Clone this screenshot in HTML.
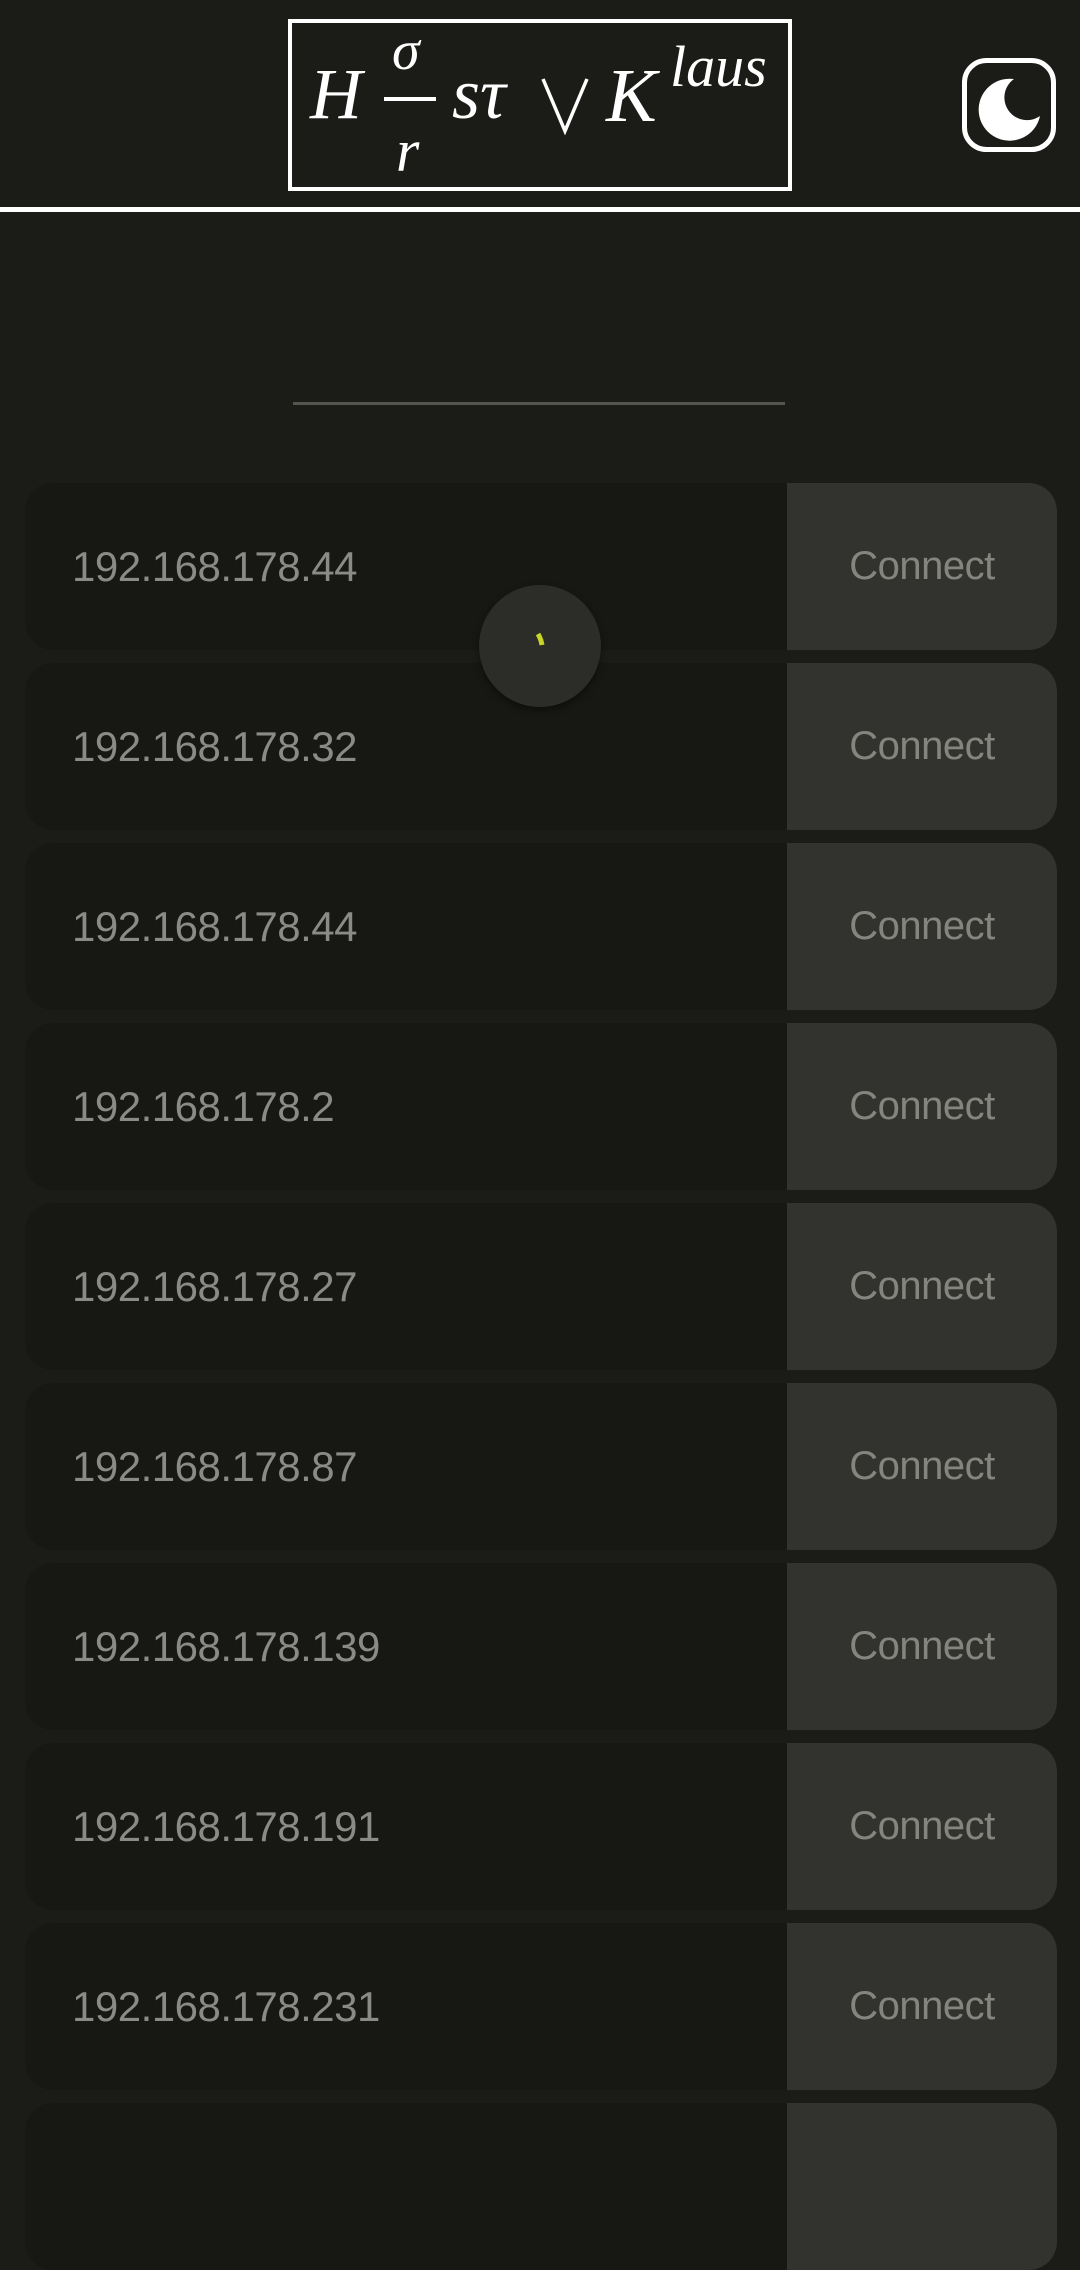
<!DOCTYPE html>
<html><head><meta charset="utf-8">
<style>
html,body{margin:0;padding:0;}
body{width:1080px;height:2161px;background:#1b1c17;overflow:hidden;position:relative;font-family:"Liberation Sans",sans-serif;}
.hdr{position:absolute;left:0;top:0;width:1080px;height:207px;background:#1b1b17;}
.hline{position:absolute;left:0;top:207px;width:1080px;height:5px;background:#fff;}
.logo{position:absolute;left:288px;top:19px;width:496px;height:164px;border:4px solid #fff;color:#fff;font-family:"Liberation Serif",serif;font-style:italic;}
.logo span{position:absolute;}
.grey{position:absolute;left:293px;top:402px;width:492px;height:3px;background:#55554f;}
.row{position:absolute;left:25px;width:1032px;height:167px;background:#171814;border-radius:28px;overflow:hidden;}
.row .ip{position:absolute;left:47px;top:0;line-height:167px;font-size:42px;color:#8a8a86;letter-spacing:-0.5px;}
.row .btn{position:absolute;right:0;top:0;width:270px;height:167px;background:#32322f;border-radius:0 28px 28px 0;color:#858580;font-size:40px;line-height:167px;text-align:center;letter-spacing:-0.5px;}
.spin{position:absolute;left:479px;top:585px;width:122px;height:122px;border-radius:50%;background:#2c2c28;box-shadow:0 3px 8px rgba(0,0,0,.45);}
</style></head><body>
<div class="hdr"></div>
<div class="hline"></div>
<div class="logo">
 <span style="left:18px;top:30px;font-size:72px;">H</span>
 <span style="left:100px;top:-4px;font-size:56px;">σ</span>
 <div style="position:absolute;left:92px;top:74px;width:52px;height:4px;background:#fff"></div>
 <span style="left:104px;top:94px;font-size:60px;">r</span>
 <span style="left:160px;top:30px;font-size:72px;">sτ</span>
 <svg style="position:absolute;left:247px;top:52px" width="52" height="60" viewBox="0 0 52 60"><path d="M4 4 L26 56 L48 4" stroke="#fff" stroke-width="3.5" fill="none"/></svg>
 <span style="left:314px;top:30px;font-size:76px;">K</span>
 <span style="left:378px;top:10px;font-size:58px;">laus</span>
</div>
<svg style="position:absolute;left:958px;top:54px" width="102" height="102" viewBox="0 0 102 102">
 <rect x="6.5" y="6.5" width="89" height="89" rx="22" fill="none" stroke="#fff" stroke-width="5"/>
 <path d="M56 25 A31 31 0 1 0 82 62 A22 22 0 1 1 56 25 Z" fill="#fff"/>
</svg>
<div class="grey"></div>

<div class="row" style="top:483px"><div class="ip">192.168.178.44</div><div class="btn">Connect</div></div>
<div class="row" style="top:663px"><div class="ip">192.168.178.32</div><div class="btn">Connect</div></div>
<div class="row" style="top:843px"><div class="ip">192.168.178.44</div><div class="btn">Connect</div></div>
<div class="row" style="top:1023px"><div class="ip">192.168.178.2</div><div class="btn">Connect</div></div>
<div class="row" style="top:1203px"><div class="ip">192.168.178.27</div><div class="btn">Connect</div></div>
<div class="row" style="top:1383px"><div class="ip">192.168.178.87</div><div class="btn">Connect</div></div>
<div class="row" style="top:1563px"><div class="ip">192.168.178.139</div><div class="btn">Connect</div></div>
<div class="row" style="top:1743px"><div class="ip">192.168.178.191</div><div class="btn">Connect</div></div>
<div class="row" style="top:1923px"><div class="ip">192.168.178.231</div><div class="btn">Connect</div></div>
<div class="row" style="top:2103px"><div class="ip"></div><div class="btn"></div></div>

<div class="spin">
 <svg width="122" height="122" viewBox="0 0 122 122"><path d="M59 49 Q62 54 63 60" stroke="#c8d42a" stroke-width="5" fill="none"/></svg>
</div>
</body></html>
